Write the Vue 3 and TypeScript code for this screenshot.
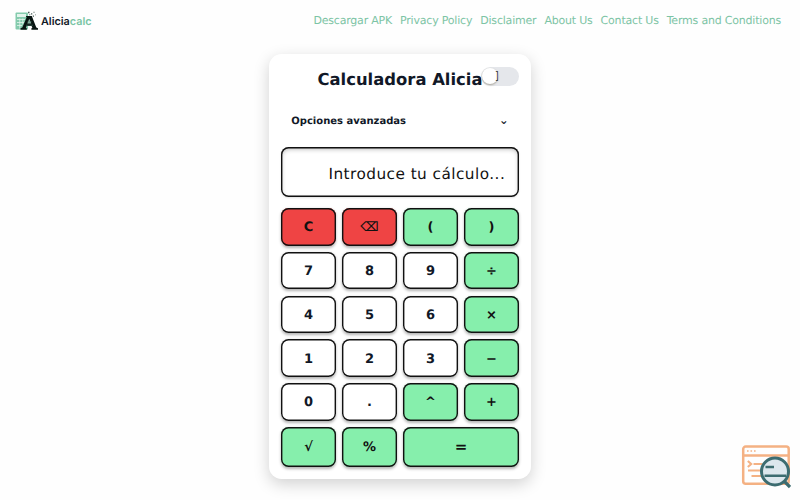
<script setup lang="ts">
import { ref } from 'vue'

type Kind = 'num' | 'op' | 'danger' | 'equal'

interface Key {
  label: string
  kind: Kind
}

const links = ['Descargar APK', 'Privacy Policy', 'Disclaimer', 'About Us', 'Contact Us', 'Terms and Conditions']

const keys: Key[] = [
  { label: 'C', kind: 'danger' },
  { label: '⌫', kind: 'danger' },
  { label: '(', kind: 'op' },
  { label: ')', kind: 'op' },
  { label: '7', kind: 'num' },
  { label: '8', kind: 'num' },
  { label: '9', kind: 'num' },
  { label: '÷', kind: 'op' },
  { label: '4', kind: 'num' },
  { label: '5', kind: 'num' },
  { label: '6', kind: 'num' },
  { label: '×', kind: 'op' },
  { label: '1', kind: 'num' },
  { label: '2', kind: 'num' },
  { label: '3', kind: 'num' },
  { label: '−', kind: 'op' },
  { label: '0', kind: 'num' },
  { label: '.', kind: 'num' },
  { label: '^', kind: 'op' },
  { label: '+', kind: 'op' },
  { label: '√', kind: 'op' },
  { label: '%', kind: 'op' },
  { label: '=', kind: 'equal' },
]

const expression = ref('')

function press(key: Key) {
  if (key.label === 'C') expression.value = ''
  else if (key.label === '⌫') expression.value = expression.value.slice(0, -1)
  else if (key.kind !== 'equal') expression.value += key.label
}
</script>

<template>
  <div class="page">
    <header class="topbar">
      <a class="logo">
        <svg class="logo-mark" viewBox="0 0 24 20">
          <rect x="0.500" y="1.500" width="12.500" height="17" rx="1" fill="#84cbad" />
          <rect x="2" y="3" width="9" height="3" fill="#e3f4ec" />
          <path d="M2 8.500h8M2 11.500h7M2 14.500h5M4.800 7.500v10M7.800 7.500v6" stroke="#e3f4ec" stroke-width=".8" fill="none" />
          <path d="M5.500 18.800h6.300v-1.500l-1-.4.800-1.900h5l.8 1.900-1 .4v1.500H23v-1.500l-1.700-.7L16.800 5h-6l.8 1.600-4.300 10-1.800.7z" fill="#081411" />
          <path d="M12.300 12.500h4l-2-4.700z" fill="#8fb5a6" />
          <path d="M11 14.200h7M12.500 10.800h4" stroke="#4d7a6b" stroke-width=".6" />
          <path d="M13 .8h1.500v1.500H13zM16 2.300h1.300v1.300H16zM18.500.8h1v1h-1zM17.800 4.500H19v1.200h-1.200zM14.300 3.200h1v1h-1zM20 3.400h.8v.8H20z" fill="#4a5e57" />
        </svg>
        <span class="logo-text">Alicia<span>calc</span></span>
      </a>
      <nav class="links">
        <a v-for="link in links" :key="link">{{ link }}</a>
      </nav>
    </header>

    <main class="calc">
      <div class="calc-head">
        <h1>Calculadora Alicia</h1>
        <button class="switch"><span class="knob"></span><span class="switch-icon">]</span></button>
      </div>

      <div class="advanced">
        <span>Opciones avanzadas</span>
        <span class="chevron">⌄</span>
      </div>

      <div class="display">{{ expression || 'Introduce tu cálculo...' }}</div>

      <div class="keys">
        <button v-for="key in keys" :key="key.label" class="key" :class="key.kind" @click="press(key)">
          {{ key.label }}
        </button>
      </div>
    </main>

    <!-- Floating search badge -->
    <svg class="badge" viewBox="0 0 50 44">
      <g fill="none" stroke="#f4b183" stroke-width="2.500">
        <rect x="2.200" y="1.600" width="45.500" height="37.200" rx="2.500" />
        <path d="M2 10.600h46" />
        <path d="M6.800 16l3.400 3-3.400 3M12.500 19h9M7 25.500h13M10.500 31h10" stroke-width="2.100" />
        <path d="M6 6h1.600M9.500 6h1.600M13 6h1.600" stroke-width="1.600" />
      </g>
      <path d="M43.500 36.500l5.500 5.500" stroke="#3c6c70" stroke-width="3.200" />
      <circle cx="34" cy="26.500" r="13.500" fill="#dce7ed" stroke="#3c6c70" stroke-width="3" />
      <path d="M24.500 22h8.500M23.500 30.800h21.500" stroke="#3c6c70" stroke-width="2.400" />
    </svg>
  </div>
</template>

<style>
body {
  margin: 0;
  background: #fefefe;
}
</style>

<style scoped>
.page {
  height: 500px;
  overflow: hidden;
  font-family: 'DejaVu Sans', sans-serif;
  color: #111827;
  text-rendering: geometricPrecision;
}
.topbar {
  display: flex;
  justify-content: space-between;
  align-items: center;
  height: 41px;
  padding: 0 19px 0 15px;
  box-sizing: border-box;
}
.logo {
  display: flex;
  align-items: center;
  gap: 2px;
}
.logo-mark {
  width: 24px;
  height: 20px;
}
.logo-text {
  padding-top: 1px;
  font-family: Inter, sans-serif;
  font-size: 10.8px;
  font-weight: 600;
}
.logo-text span { color: #79c5a4; }
.links {
  display: flex;
  gap: 8px;
  font-size: 11px;
  letter-spacing: -0.2px;
  color: #7dc4a5;
  white-space: nowrap;
}

.calc {
  width: 262.5px;
  height: 425px;
  margin: 13px auto 0;
  padding: 12.5px;
  box-sizing: border-box;
  background: #fff;
  border-radius: 12.5px;
  box-shadow: 0 5px 16px rgba(0, 0, 0, 0.18);
}
.calc-head {
  position: relative;
  height: 26px;
  text-align: center;
}
h1 {
  margin: 0;
  font-size: 16.4px;
  line-height: 26px;
}
/* the switch sits over the end of the title */
.switch {
  position: absolute;
  top: 0;
  right: 0;
  width: 37.5px;
  height: 19px;
  padding: 0;
  border: 0;
  border-radius: 10px;
  background: #e5e7eb;
}
.knob {
  position: absolute;
  z-index: 1;
  top: 1px;
  left: 0.5px;
  width: 16px;
  height: 16px;
  border-radius: 50%;
  background: #fff;
  box-shadow: 0 1px 2px rgba(90, 80, 50, 0.45);
}
.switch-icon {
  position: absolute;
  z-index: 2;
  top: 4px;
  left: 14.5px;
  color: #333;
  font-size: 10px;
  line-height: 10px;
}
.advanced {
  display: flex;
  justify-content: space-between;
  align-items: center;
  height: 25px;
  margin-top: 15px;
  padding: 0 10px;
  box-sizing: border-box;
  font-size: 10px;
  font-weight: bold;
}
.advanced span:first-child { padding-top: 2px; }
.chevron { font-size: 11.5px; }
.display {
  height: 50px;
  margin-top: 14.5px;
  padding: 1.5px 13.5px 0;
  box-sizing: border-box;
  border-radius: 7.5px;
  box-shadow: inset 0 0 0 1.4px #111, inset 0 2px 5px rgba(0, 0, 0, 0.3), 0 1px 2px rgba(0, 0, 0, 0.12);
  color: #111;
  font-size: 15.3px;
  line-height: 50px;
  letter-spacing: 0.46px;
  text-align: right;
  white-space: nowrap;
}
.keys {
  display: grid;
  grid-template-columns: repeat(4, 1fr);
  grid-template-rows: repeat(5, 37.5px) 40px;
  gap: 6.25px;
  margin-top: 11px;
}
.key {
  padding: 2px 0 0;
  border: 0;
  border-radius: 7.5px;
  box-shadow: inset 0 0 0 1.4px #111, 0 1.5px 3px rgba(0, 0, 0, 0.3);
  background: #fff;
  color: #111827;
  font-family: inherit;
  font-size: 13px;
  font-weight: bold;
  text-rendering: inherit;
}
.key.op,
.key.equal {
  background: #86efac;
  color: #111;
}
.key.danger {
  background: #ef4444;
  color: #111;
}
.key.equal {
  grid-column: span 2;
  padding-top: 0;
  font-size: 15px;
}

/* floats over the page corner */
.badge {
  position: absolute;
  left: 741px;
  top: 445px;
  width: 50px;
  height: 44px;
}
</style>
